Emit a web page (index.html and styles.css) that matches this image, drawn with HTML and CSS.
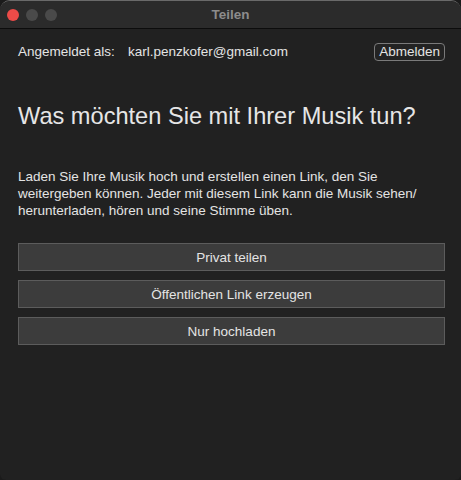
FILE: index.html
```html
<!DOCTYPE html>
<html lang="de">
<head>
    <meta charset="UTF-8">
    <meta name="viewport" content="width=device-width, initial-scale=1.0">
    <title>Teilen</title>
    <link rel="stylesheet" href="styles.css">
</head>
<body>
    <div id="window">
        <div class="titlebar">
            <div class="lights">
                <span class="light close"></span>
                <span class="light"></span>
                <span class="light"></span>
            </div>
            <div class="title">Teilen</div>
        </div>
        <div class="content">
            <div class="account">
                <span class="label">Angemeldet als:</span>
                <span class="email">karl.penzkofer@gmail.com</span>
                <button class="logout">Abmelden</button>
            </div>
            <h1>Was möchten Sie mit Ihrer Musik tun?</h1>
            <p class="info">Laden Sie Ihre Musik hoch und erstellen einen Link, den Sie weitergeben können. Jeder mit diesem Link kann die Musik sehen/ herunterladen, hören und seine Stimme üben.</p>
            <div class="actions">
                <button class="action">Privat teilen</button>
                <button class="action">Öffentlichen Link erzeugen</button>
                <button class="action">Nur hochladen</button>
            </div>
        </div>
    </div>
</body>
</html>
```

FILE: styles.css
```css
*{
    margin: 0;
    padding: 0;
    box-sizing: border-box;
}
html, body{
    height: 100%;
}
body{
    background: #1b1b1b;
    font-family: "Liberation Sans", Arial, sans-serif;
    color: #e4e4e4;
}
#window{
    height: 480px;
    background: #212121;
    border-radius: 10px 10px 6px 6px;
    overflow: hidden;
    border-top: 1px solid #6a6a6a;
}
.titlebar{
    height: 28px;
    background: #2b2b2b;
    border-bottom: 1px solid #0c0c0c;
    display: flex;
    align-items: center;
    position: relative;
}
.lights{
    display: flex;
    gap: 7px;
    padding-left: 7px;
}
.light{
    width: 12px;
    height: 12px;
    border-radius: 50%;
    background: #4a4a4a;
}
.light.close{
    background: #ec4b48;
}
.title{
    position: absolute;
    left: 0;
    right: 0;
    text-align: center;
    font-size: 13.5px;
    font-weight: bold;
    color: #8c8c8c;
}
.content{
    padding: 13px 16px 0 18px;
}
.account{
    display: flex;
    align-items: center;
    font-size: 13.5px;
    height: 19px;
}
.label{
    width: 110px;
}
.email{
    flex: 1;
}
.logout{
    font-family: inherit;
    font-size: 13.5px;
    color: #e4e4e4;
    background: #232323;
    border: 1px solid #7a7a7a;
    border-radius: 4px;
    height: 18px;
    padding: 0 4px;
}
h1{
    font-size: 23.6px;
    font-weight: normal;
    margin-top: 40px;
    line-height: 30px;
    color: #e6e6e6;
}
.info{
    font-size: 13.5px;
    line-height: 17px;
    margin-top: 37px;
    padding-right: 10px;
}
.actions{
    display: flex;
    flex-direction: column;
    gap: 9px;
    margin-top: 24px;
}
.action{
    font-family: inherit;
    font-size: 13.5px;
    color: #e4e4e4;
    background: #3c3c3c;
    border: 1px solid #5c5c5c;
    height: 28px;
}
```
